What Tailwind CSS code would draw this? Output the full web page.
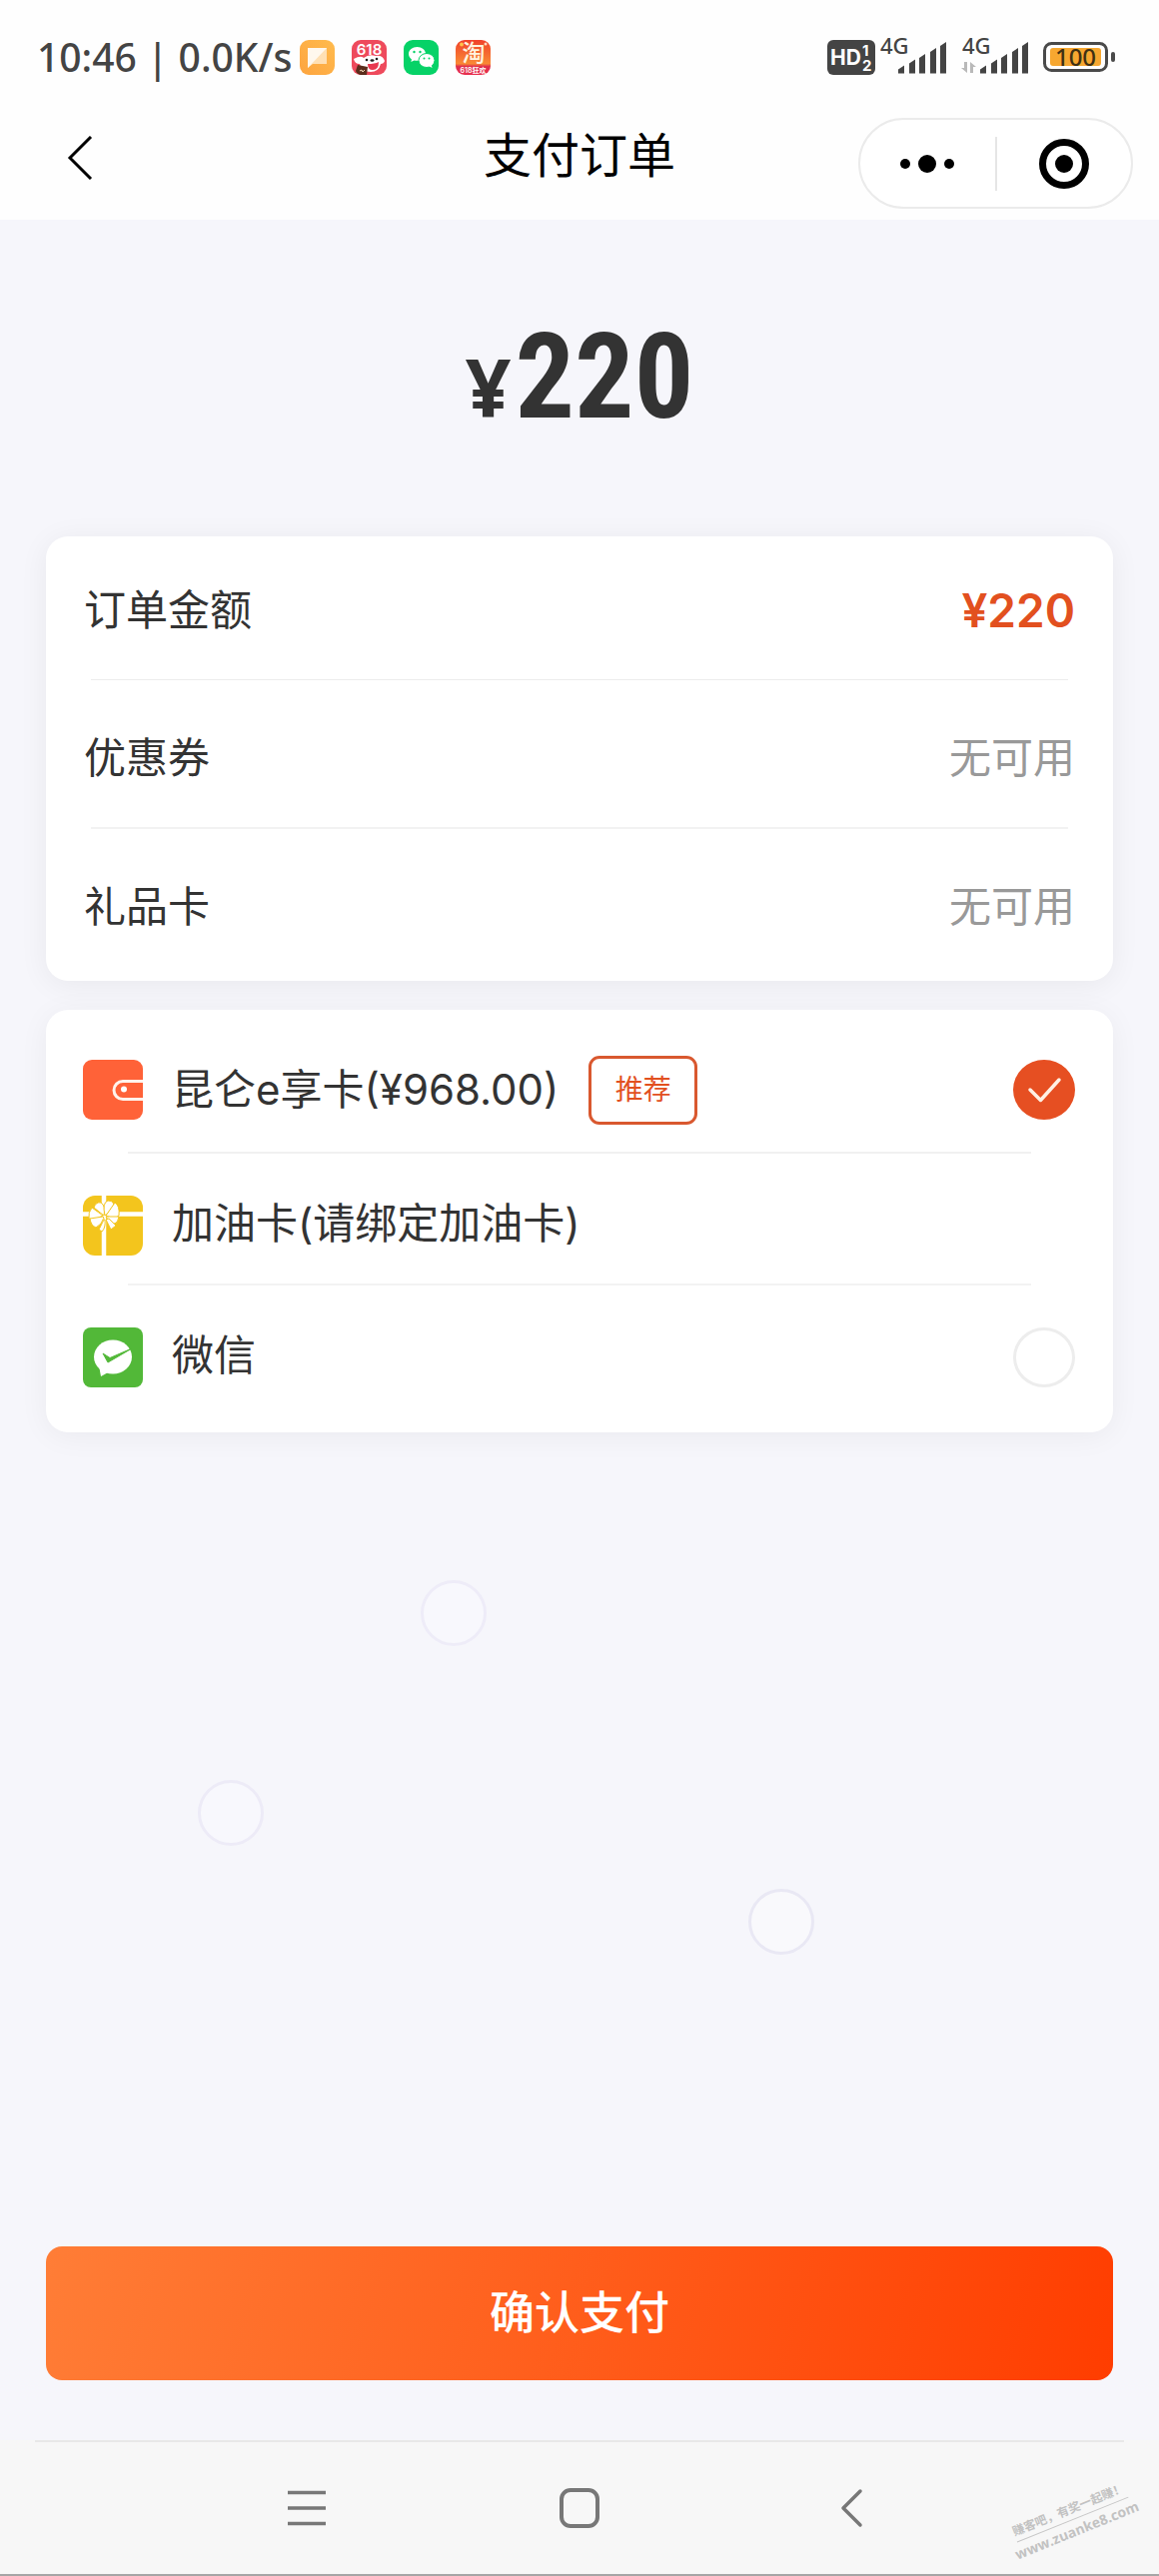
<!DOCTYPE html>
<html lang="zh-CN">
<head>
<meta charset="utf-8">
<meta name="viewport" content="width=device-width, initial-scale=1">
<title>支付订单</title>
<script src="https://cdn.jsdelivr.net/npm/@tailwindcss/browser@4"></script>
</head>
<body class="flex min-h-screen flex-col bg-[#f6f6fb] font-['Inter','Noto_Sans_CJK_SC',sans-serif] text-[#333]">

<div class="bg-[#fefefe]">
  <!-- Status bar -->
  <div class="flex h-[114px] items-center justify-between pr-[44px] pl-[37px] text-[#444]">
    <div class="flex items-center gap-2">
      <span class="font-['Noto_Sans',sans-serif] text-[39px] leading-[56px] font-medium whitespace-pre">10:46 | 0.0K/s</span>
      <div class="flex gap-[17px]">
        <svg class="size-[35px]" viewBox="0 0 35 35" aria-hidden="true">
          <defs><linearGradient id="note" x1="0" y1="1" x2="1" y2="0"><stop stop-color="#fda43f"/><stop offset="1" stop-color="#ffbb4d"/></linearGradient></defs>
          <rect width="35" height="35" rx="9" fill="url(#note)"/>
          <path d="M8 8h19v16H13l-5 4z" fill="#ffe0b4"/><path d="M8 8h19L8 28z" fill="#fff8ee"/>
        </svg>
        <svg class="size-[35px]" viewBox="0 0 35 35" aria-hidden="true">
          <rect width="35" height="35" rx="9" fill="#ee4a5c"/>
          <path d="M2 19q7-4 10-1 5-4 12-2 7-1 9 5-1 3-4 3-2 8-10 8-9 0-11-8-5 0-6-5z" fill="#fff"/>
          <path d="M16 24q7 0 11-2 0 8-6 8-5 0-5-6z" fill="#e8384f"/>
          <circle cx="15" cy="20" r="1.300" fill="#222"/><circle cx="25" cy="19" r="1.300" fill="#222"/><ellipse cx="20.500" cy="20.500" rx="2" ry="1.300" fill="#222"/>
          <path d="M6 25l10 2-1 8H9q-4-1-5-4z" fill="#5a2d1c"/><path d="M8 31l2-1 1 2 2-2" stroke="#f3d9b8" fill="none"/>
          <text x="17.500" y="15" text-anchor="middle" font-family="Inter" font-size="15" font-weight="600" fill="#fff">618</text>
        </svg>
        <svg class="size-[35px]" viewBox="0 0 35 35" aria-hidden="true">
          <rect width="35" height="35" rx="9" fill="#06d267"/>
          <path d="M13.500 7C8.800 7 5 10 5 14c0 2.200 1.200 4.100 3 5.400L7.300 22l3.200-1.600q1.400.4 3 .4C18.200 20.800 22 18 22 14s-3.800-7-8.500-7z" fill="#fff"/>
          <ellipse cx="23" cy="20.500" rx="8" ry="7" fill="#fff" stroke="#06d267"/><path d="M25 26l3.500 2-.7-3z" fill="#fff"/>
          <circle cx="10.500" cy="12" r="1.200" fill="#06d267"/><circle cx="16.500" cy="12" r="1.200" fill="#06d267"/>
          <circle cx="20.500" cy="18.500" r="1" fill="#06d267"/><circle cx="25.500" cy="18.500" r="1" fill="#06d267"/>
        </svg>
        <svg class="size-[35px] overflow-visible" viewBox="0 0 35 35" aria-hidden="true">
          <defs><linearGradient id="tao" x1="0" y1="0" x2="0" y2="1"><stop stop-color="#f0412b"/><stop offset=".68" stop-color="#f98a34"/><stop offset=".76" stop-color="#e02d4c"/><stop offset="1" stop-color="#e8304f"/></linearGradient></defs>
          <rect width="35" height="35" rx="9" fill="url(#tao)"/>
          <circle cx="6" cy="4.500" r="2" fill="#ffc14a"/><circle cx="30" cy="4" r="1.500" fill="#ffd9c0"/>
          <text x="18" y="21" text-anchor="middle" font-family="'Noto Sans CJK SC'" font-size="23" font-weight="500" fill="#fff4e0">淘</text>
          <text x="17.500" y="33" text-anchor="middle" font-family="Inter,'Noto Sans CJK SC'" font-size="7" font-weight="600" fill="#fff">618狂欢</text>
        </svg>
      </div>
    </div>

    <svg class="h-[60px] w-[288px]" viewBox="828 27 288 60" role="img" aria-label="HD, 4G, 4G, 100%">
      <rect x="828" y="40" width="48" height="35" rx="6" fill="#444"/>
      <g font-family="Inter" font-weight="700" fill="#fff"><text x="831" y="65" font-size="21">HD</text><text x="863" y="56" font-size="15">1</text><text x="863" y="71" font-size="15">2</text></g>
      <g font-family="'Noto Sans'" font-size="22" font-weight="500" fill="#444"><text x="881" y="54">4G</text><text x="963" y="54">4G</text></g>
      <g fill="#444">
        <path d="M899 73.500v-4l6-4v8zM910 73.500V63.500l6-4v14zM920 73.500V58l6-4v19.500zM931 73.500V52l6-4v25.500zM941 73.500V46l6-4v31.500z"/>
        <path d="M981 73.500v-4l6-4v8zM992 73.500V63.500l6-4v14zM1002 73.500V58l6-4v19.500zM1013 73.500V52l6-4v25.500zM1023 73.500V46l6-4v31.500z"/>
      </g>
      <path d="M968 62v11l-6-5h3v-6zM971 73V62l6 5h-3v6z" fill="#b9b9b9"/>
      <rect x="1045.500" y="43.500" width="62" height="27" rx="7" fill="#fff" stroke="#4a4a4a" stroke-width="3"/>
      <rect x="1051" y="48" width="51" height="18" rx="3" fill="#f6a730"/>
      <rect x="1112" y="52" width="4" height="10" rx="2" fill="#4a4a4a"/>
      <text x="1076.500" y="66" text-anchor="middle" font-family="'Noto Sans'" font-size="24" font-weight="500" fill="#3f3013">100</text>
    </svg>
  </div>

  <!-- Title bar -->
  <header class="grid h-[106px] grid-cols-[275px_1fr_275px] items-start px-[26px]">
    <button type="button" aria-label="返回" class="mt-[22px] ml-[34px] flex h-11 w-10 items-center">
      <svg class="h-11 w-10" viewBox="0 0 40 44" fill="none" stroke="#000" stroke-width="3" aria-hidden="true"><path d="M31 1L10 22l21 21"/></svg>
    </button>
    <h1 class="mt-[18px] text-center text-[48px] leading-[48px] text-black">支付订单</h1>
    <div class="mt-1 flex h-[91px] items-center rounded-full border-2 border-[#ebebeb] bg-white">
      <button type="button" aria-label="更多" class="flex h-[54px] flex-1 items-center justify-center border-r-2 border-[#e6e6e6]">
        <svg class="h-5 w-14" viewBox="0 0 56 20" aria-hidden="true"><circle cx="6" cy="10" r="5"/><circle cx="28" cy="10" r="9"/><circle cx="50" cy="10" r="5"/></svg>
      </button>
      <button type="button" aria-label="关闭" class="flex h-[54px] flex-1 items-center justify-center">
        <svg class="size-[50px]" viewBox="0 0 50 50" aria-hidden="true"><circle cx="25" cy="25" r="21.500" fill="none" stroke="#000" stroke-width="7"/><circle cx="25" cy="25" r="9"/></svg>
      </button>
    </div>
  </header>
</div>

<main class="flex flex-1 flex-col px-[46px]">
  <p class="flex h-[317px] items-baseline justify-center gap-1 pt-[98px] leading-[120px] font-bold">
    <span class="font-['Noto_Sans',sans-serif] text-[80px]">¥</span><span class="font-['Roboto_Condensed','Roboto',sans-serif] text-[118px]">220</span>
  </p>

  <dl class="rounded-[22px] bg-white text-[42px] leading-[60px] shadow-[0_4px_30px_rgba(0,0,0,0.06)]">
    <div class="px-[38px]">
      <div class="flex h-[143px] items-center justify-between pt-1"><dt>订单金额</dt><dd class="text-[46px] font-semibold text-[#e2501f]">¥220</dd></div>
    </div>
    <div class="mx-[45px] h-px bg-[#ececec]"></div>
    <div class="px-[38px]">
      <div class="flex h-[147px] items-center justify-between pt-2"><dt>优惠券</dt><dd class="text-[#999]">无可用</dd></div>
    </div>
    <div class="mx-[45px] h-[2px] bg-[#f2f2f2]"></div>
    <div class="px-[38px]">
      <div class="flex h-[152px] items-center justify-between pt-1"><dt>礼品卡</dt><dd class="text-[#999]">无可用</dd></div>
    </div>
  </dl>

  <form id="pay" class="mt-[29px] rounded-[22px] bg-white text-[42px] leading-[60px] shadow-[0_4px_30px_rgba(0,0,0,0.05)]">
    <label class="flex h-[142px] items-center pt-[18px] pr-[38px] pl-[37px]">
      <svg class="size-[60px]" viewBox="0 0 60 60" aria-hidden="true"><rect width="60" height="60" rx="9" fill="#ff6238"/><path d="M60 21.500H40a9 9 0 0 0-9 9 9 9 0 0 0 9 9h20" fill="none" stroke="#fff3ec" stroke-width="3"/><circle cx="41" cy="29.500" r="3" fill="#fff"/></svg>
      <span class="ml-[29px]">昆仑e享卡(¥968.00)</span>
      <span class="ml-[30px] flex h-[69px] w-[109px] items-center justify-center rounded-[11px] border-3 border-[#d9582f] text-[28px] text-[#e2501f]">推荐</span>
      <span class="relative ml-auto h-[60px] w-[62px]">
        <input type="radio" name="method" checked class="peer block h-[60px] w-[62px] appearance-none rounded-[50%] border-3 border-[#ededed] checked:border-[#e64f22] checked:bg-[#e64f22]">
        <svg class="pointer-events-none absolute inset-0 hidden peer-checked:block" viewBox="0 0 62 60" fill="none" stroke="#fff0e4" stroke-width="3.500" stroke-linecap="round" stroke-linejoin="round" aria-hidden="true"><path d="M17 30l10.500 10.500L46 20"/></svg>
      </span>
    </label>
    <div class="mx-[82px] h-[2px] bg-[#f1f1f1]"></div>
    <div class="flex h-[130px] items-center pt-[14px] pl-[37px]">
      <svg class="size-[60px]" viewBox="0 0 60 60" aria-hidden="true">
        <rect width="60" height="60" rx="12" fill="#f3c51d"/><path d="M21 0v60M0 18.500h60" stroke="#fff" stroke-width="4.500"/>
        <g fill="#fff" stroke="#f3c51d" stroke-width="1"><path d="M21 20L11 12q2-6 7-5 5 3 3 13z"/><path d="M22 20Q19 7 25 5q8 0 5 9z"/><path d="M23 20l9-13q5 3 4 13-4 4-13 0z"/><path d="M20 20L9 12q-4 5-3 11 5 2 14-3z"/><path d="M20 21L7 23q1 7 6 9 6-3 8-10z"/><path d="M23 21l13 0q-1 6-4 7-5 0-9-7z"/><path d="M21 24l-5 10 3 2q4-4 3-12z"/><path d="M23 24l5 10 5-4-7-7z"/></g>
      </svg>
      <span class="ml-[29px] pb-1">加油卡(请绑定加油卡)</span>
    </div>
    <div class="mx-[82px] h-[2px] bg-[#f3f3f3]"></div>
    <label class="flex h-[147px] items-center pr-[38px] pb-1 pl-[37px]">
      <svg class="size-[60px]" viewBox="0 0 60 60" aria-hidden="true"><rect width="60" height="60" rx="8" fill="#52b838"/><ellipse cx="30" cy="29.500" rx="19" ry="17" fill="#fff"/><path d="M16 38l2 11 9-5z" fill="#fff"/><path d="M20 26l5 9 24-14-22 9.500z" fill="#52b838" stroke="#52b838" stroke-linejoin="round"/></svg>
      <span class="ml-[29px] pb-1">微信</span>
      <input type="radio" name="method" class="ml-auto block h-[60px] w-[62px] appearance-none rounded-[50%] border-3 border-[#ededed] checked:border-[#e64f22] checked:bg-[#e64f22]">
    </label>
  </form>

  <!-- Floating bubbles -->
  <div class="relative -mx-[46px] min-h-[600px] flex-1" aria-hidden="true">
    <i class="absolute top-[148px] left-[36.300%] size-[66px] rounded-full border-3 border-[#eeecf8] bg-[#f8f8fd]"></i>
    <i class="absolute top-[348px] left-[17.100%] size-[66px] rounded-full border-3 border-[#edebf7] bg-[#f8f8fd]"></i>
    <i class="absolute top-[457px] left-[64.600%] size-[66px] rounded-full border-3 border-[#e9e8f4] bg-[#f9f9fc]"></i>
  </div>

  <button type="submit" form="pay" class="mb-[60px] h-[134px] rounded-[16px] bg-linear-[105deg] from-[#ff7d36] to-[#ff3d00] text-[45px] font-medium text-white">确认支付</button>
</main>

<!-- System navigation -->
<nav class="relative h-[136px] border-b-2 border-[#a6a6a6] bg-[#f7f7f7]">
  <div class="mx-[35px] h-[2px] bg-[#e8e8e8]"></div>
  <div class="flex h-[132px] items-center justify-center gap-[231px] text-[#777]">
    <button type="button" aria-label="最近任务"><svg class="size-[42px]" viewBox="0 0 42 42" fill="none" stroke="currentColor" stroke-width="3.500" aria-hidden="true"><path d="M2 5.500h38M2 21h38M2 36.500h38"/></svg></button>
    <button type="button" aria-label="主屏幕"><svg class="size-[42px]" viewBox="0 0 42 42" fill="none" stroke="currentColor" stroke-width="4" aria-hidden="true"><rect x="3" y="3" width="36" height="36" rx="9"/></svg></button>
    <button type="button" aria-label="返回"><svg class="size-[42px]" viewBox="0 0 42 42" fill="none" stroke="currentColor" stroke-width="3.500" stroke-linecap="round" stroke-linejoin="round" aria-hidden="true"><path d="M29 4L12 21l17 17"/></svg></button>
  </div>
  <div class="absolute right-[26px] bottom-[32px] flex w-[120px] -rotate-[22deg] flex-col items-center font-bold whitespace-nowrap text-[#c2c2c2]">
    <div class="border-b border-[#c6c6c6] text-[12px] leading-[20px]">赚客吧，有奖一起赚！</div>
    <div class="font-['Open_Sans',sans-serif] text-[14px] leading-[22px]">www.zuanke8.com</div>
  </div>
</nav>
</body>
</html>
